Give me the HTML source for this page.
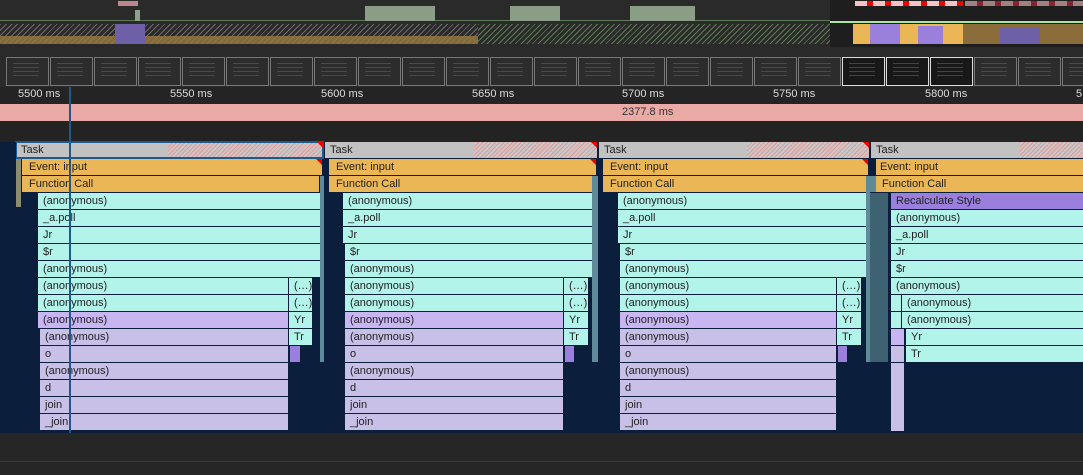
<!DOCTYPE html>
<html><head><style>
*{margin:0;padding:0}
body{width:1083px;height:475px;background:#282828;position:relative;overflow:hidden;font-family:"Liberation Sans",sans-serif}
.a{position:absolute}
.b{position:absolute;height:16px;font-size:11px;line-height:17px;padding-left:5px;color:#222;box-sizing:border-box;overflow:hidden;white-space:nowrap}
.c{background:#b2f3ea}.o{background:#ebb655}.t{background:#c2c2c2}.p{background:#c8b5f2}.l{background:#c8c0e6}.r{background:#9a7fdc}
.h{background:repeating-linear-gradient(135deg,#e29a9a 0 1px,#c8c8c8 1px 3px)}
.f{position:absolute;top:57px;width:41px;height:27px;border:1px solid #777;background:#2c2c2c}
.f::after{content:"";position:absolute;left:6px;top:5px;width:26px;height:16px;background:repeating-linear-gradient(180deg,#555 0 1px,transparent 1px 4px);opacity:.7}
.tl{position:absolute;top:88px;font-size:11px;color:#ddd}
.tri{position:absolute;width:0;height:0;border-top:6px solid #e00;border-left:6px solid transparent}
</style></head><body>
<!-- overview -->
<div class="a" style="left:0;top:0;width:1083px;height:47px;background:#2a2a2a"></div>
<div class="a" style="left:0;top:20px;width:1083px;height:1px;background:#5c7a55"></div>
<div class="a" style="left:135px;top:10px;width:5px;height:11px;background:#8da388"></div>
<div class="a" style="left:365px;top:6px;width:70px;height:15px;background:#8a9e85"></div>
<div class="a" style="left:510px;top:6px;width:50px;height:15px;background:#8a9e85"></div>
<div class="a" style="left:630px;top:6px;width:65px;height:15px;background:#8a9e85"></div>
<div class="a" style="left:118px;top:1px;width:20px;height:5px;background:#b8888a"></div>
<div class="a" style="left:0;top:24px;width:830px;height:20px;background:repeating-linear-gradient(135deg,#6c6c6c 0 1px,#2a2a2a 1px 4px)"></div>
<div class="a" style="left:0;top:36px;width:830px;height:8px;background:#9a7a40;opacity:.8"></div>
<div class="a" style="left:115px;top:24px;width:30px;height:20px;background:#6f5fa6"></div>
<div class="a" style="left:478px;top:24px;width:352px;height:20px;background:repeating-linear-gradient(135deg,#5d7a52 0 1px,#2a2a2a 1px 4px)"></div>
<div class="a" style="left:830px;top:0;width:253px;height:47px;background:#1e1e1e"></div>
<div class="a" style="left:830px;top:21px;width:253px;height:2px;background:#a6e89a"></div>
<div class="a" style="left:853px;top:24px;width:110px;height:20px;background:#ebb655"></div>
<div class="a" style="left:870px;top:24px;width:30px;height:20px;background:#9a7fdc"></div>
<div class="a" style="left:918px;top:26px;width:25px;height:18px;background:#9a7fdc"></div>
<div class="a" style="left:963px;top:24px;width:120px;height:20px;background:#8b6d3c"></div>
<div class="a" style="left:1000px;top:28px;width:40px;height:16px;background:#6f5fa6"></div>
<div class="a" style="left:855px;top:1px;width:108px;height:5px;background:repeating-linear-gradient(90deg,#f4c4c4 0 12px,#e00 12px 18px)"></div>
<div class="a" style="left:965px;top:1px;width:118px;height:5px;background:repeating-linear-gradient(90deg,#a08080 0 12px,#8a2030 12px 18px)"></div>
<div class="a" style="left:0;top:47px;width:1083px;height:40px;background:#2a2a2a"></div>
<div class="f" style="left:6px"></div><div class="f" style="left:50px"></div><div class="f" style="left:94px"></div><div class="f" style="left:138px"></div><div class="f" style="left:182px"></div><div class="f" style="left:226px"></div><div class="f" style="left:270px"></div><div class="f" style="left:314px"></div><div class="f" style="left:358px"></div><div class="f" style="left:402px"></div><div class="f" style="left:446px"></div><div class="f" style="left:490px"></div><div class="f" style="left:534px"></div><div class="f" style="left:578px"></div><div class="f" style="left:622px"></div><div class="f" style="left:666px"></div><div class="f" style="left:710px"></div><div class="f" style="left:754px"></div><div class="f" style="left:798px"></div><div class="f" style="left:842px;border-color:#ddd;background:#181818"></div><div class="f" style="left:886px;border-color:#ddd;background:#181818"></div><div class="f" style="left:930px;border-color:#ddd;background:#181818"></div><div class="f" style="left:974px"></div><div class="f" style="left:1018px"></div><div class="f" style="left:1062px"></div>
<!-- ruler -->
<div class="a" style="left:0;top:87px;width:1083px;height:17px;background:#242424"></div>
<div class="tl" style="left:18px">5500 ms</div><div class="tl" style="left:170px">5550 ms</div><div class="tl" style="left:321px">5600 ms</div><div class="tl" style="left:472px">5650 ms</div><div class="tl" style="left:622px">5700 ms</div><div class="tl" style="left:773px">5750 ms</div><div class="tl" style="left:925px">5800 ms</div><div class="tl" style="left:1076px">5</div>
<div class="a" style="left:0;top:104px;width:1083px;height:17px;background:#eaaaa6;font-size:11px;line-height:17px;color:#333"><span style="position:absolute;left:622px">2377.8 ms</span></div>
<div class="a" style="left:0;top:121px;width:1083px;height:21px;background:#232323"></div>
<!-- flame -->
<div class="a" style="left:0;top:142px;width:1083px;height:291px;background:#0b1e3b"></div>
<!-- G1 -->
<div class="b t" style="left:16px;top:142px;width:307px">Task</div>
<div class="a h" style="left:168px;top:142px;width:155px;height:16px"></div>
<div class="a" style="left:15px;top:141px;width:309px;height:18px;border:2px solid #1a5a94;box-sizing:border-box"></div>
<div class="b o" style="left:22px;top:159px;width:300px;padding-left:7px">Event: input</div>
<div class="b o" style="left:22px;top:176px;width:297px;padding-left:7px">Function Call</div>
<div class="b c" style="left:38px;top:193px;width:282px">(anonymous)</div>
<div class="b c" style="left:38px;top:210px;width:282px">_a.poll</div>
<div class="b c" style="left:38px;top:227px;width:282px">Jr</div>
<div class="b c" style="left:38px;top:244px;width:282px">$r</div>
<div class="b c" style="left:38px;top:261px;width:282px">(anonymous)</div>
<div class="b c" style="left:38px;top:278px;width:250px">(anonymous)</div><div class="b c" style="left:289px;top:278px;width:23px">(…)</div>
<div class="b c" style="left:38px;top:295px;width:250px">(anonymous)</div><div class="b c" style="left:289px;top:295px;width:23px">(…)</div>
<div class="b p" style="left:38px;top:312px;width:250px">(anonymous)</div><div class="b c" style="left:289px;top:312px;width:23px">Yr</div>
<div class="b l" style="left:40px;top:329px;width:248px">(anonymous)</div><div class="b c" style="left:289px;top:329px;width:23px">Tr</div>
<div class="b l" style="left:40px;top:346px;width:248px">o</div><div class="a r" style="left:290px;top:346px;width:10px;height:16px"></div>
<div class="b l" style="left:40px;top:363px;width:248px">(anonymous)</div>
<div class="b l" style="left:40px;top:380px;width:248px">d</div>
<div class="b l" style="left:40px;top:397px;width:248px">join</div>
<div class="b l" style="left:40px;top:414px;width:248px">_join</div>
<div class="a" style="left:320px;top:176px;width:4px;height:186px;background:#5f8a9a"></div>
<!-- G2 -->
<div class="b t" style="left:325px;top:142px;width:272px">Task</div>
<div class="a h" style="left:474px;top:142px;width:123px;height:16px"></div>
<div class="b o" style="left:329px;top:159px;width:267px;padding-left:7px">Event: input</div>
<div class="b o" style="left:329px;top:176px;width:263px;padding-left:7px">Function Call</div>
<div class="b c" style="left:343px;top:193px;width:249px">(anonymous)</div>
<div class="b c" style="left:343px;top:210px;width:249px">_a.poll</div>
<div class="b c" style="left:343px;top:227px;width:249px">Jr</div>
<div class="b c" style="left:345px;top:244px;width:247px">$r</div>
<div class="b c" style="left:345px;top:261px;width:247px">(anonymous)</div>
<div class="b c" style="left:345px;top:278px;width:218px">(anonymous)</div><div class="b c" style="left:564px;top:278px;width:24px">(…)</div>
<div class="b c" style="left:345px;top:295px;width:218px">(anonymous)</div><div class="b c" style="left:564px;top:295px;width:24px">(…)</div>
<div class="b p" style="left:345px;top:312px;width:218px">(anonymous)</div><div class="b c" style="left:564px;top:312px;width:24px">Yr</div>
<div class="b l" style="left:345px;top:329px;width:218px">(anonymous)</div><div class="b c" style="left:564px;top:329px;width:24px">Tr</div>
<div class="b l" style="left:345px;top:346px;width:218px">o</div><div class="a r" style="left:565px;top:346px;width:9px;height:16px"></div>
<div class="b l" style="left:345px;top:363px;width:218px">(anonymous)</div>
<div class="b l" style="left:345px;top:380px;width:218px">d</div>
<div class="b l" style="left:345px;top:397px;width:218px">join</div>
<div class="b l" style="left:345px;top:414px;width:218px">_join</div>
<div class="a" style="left:592px;top:176px;width:6px;height:186px;background:#5f8a9a"></div>
<!-- G3 -->
<div class="b t" style="left:599px;top:142px;width:270px">Task</div>
<div class="a h" style="left:747px;top:142px;width:122px;height:16px"></div>
<div class="b o" style="left:603px;top:159px;width:265px;padding-left:7px">Event: input</div>
<div class="b o" style="left:603px;top:176px;width:263px;padding-left:7px">Function Call</div>
<div class="b c" style="left:618px;top:193px;width:248px">(anonymous)</div>
<div class="b c" style="left:618px;top:210px;width:248px">_a.poll</div>
<div class="b c" style="left:618px;top:227px;width:248px">Jr</div>
<div class="b c" style="left:620px;top:244px;width:246px">$r</div>
<div class="b c" style="left:620px;top:261px;width:246px">(anonymous)</div>
<div class="b c" style="left:620px;top:278px;width:216px">(anonymous)</div><div class="b c" style="left:837px;top:278px;width:24px">(…)</div>
<div class="b c" style="left:620px;top:295px;width:216px">(anonymous)</div><div class="b c" style="left:837px;top:295px;width:24px">(…)</div>
<div class="b p" style="left:620px;top:312px;width:216px">(anonymous)</div><div class="b c" style="left:837px;top:312px;width:24px">Yr</div>
<div class="b l" style="left:620px;top:329px;width:216px">(anonymous)</div><div class="b c" style="left:837px;top:329px;width:24px">Tr</div>
<div class="b l" style="left:620px;top:346px;width:216px">o</div><div class="a r" style="left:838px;top:346px;width:9px;height:16px"></div>
<div class="b l" style="left:620px;top:363px;width:216px">(anonymous)</div>
<div class="b l" style="left:620px;top:380px;width:216px">d</div>
<div class="b l" style="left:620px;top:397px;width:216px">join</div>
<div class="b l" style="left:620px;top:414px;width:216px">_join</div>
<div class="a" style="left:866px;top:176px;width:4px;height:186px;background:#5f8a9a"></div>
<!-- G4 -->
<div class="b t" style="left:871px;top:142px;width:212px">Task</div>
<div class="a h" style="left:1020px;top:142px;width:63px;height:16px"></div>
<div class="b o" style="left:876px;top:159px;width:207px;padding-left:4px">Event: input</div>
<div class="b o" style="left:876px;top:176px;width:207px;padding-left:6px">Function Call</div>
<div class="b r" style="left:891px;top:193px;width:192px">Recalculate Style</div>
<div class="b c" style="left:891px;top:210px;width:192px">(anonymous)</div>
<div class="b c" style="left:891px;top:227px;width:192px">_a.poll</div>
<div class="b c" style="left:891px;top:244px;width:192px">Jr</div>
<div class="b c" style="left:891px;top:261px;width:192px">$r</div>
<div class="b c" style="left:891px;top:278px;width:192px">(anonymous)</div>
<div class="b c" style="left:891px;top:295px;width:10px"></div><div class="b c" style="left:902px;top:295px;width:181px">(anonymous)</div>
<div class="b c" style="left:891px;top:312px;width:10px"></div><div class="b c" style="left:902px;top:312px;width:181px">(anonymous)</div>
<div class="b p" style="left:891px;top:329px;width:13px"></div><div class="b c" style="left:906px;top:329px;width:177px">Yr</div>
<div class="b l" style="left:891px;top:346px;width:13px"></div><div class="b c" style="left:906px;top:346px;width:177px">Tr</div>
<div class="a l" style="left:891px;top:363px;width:13px;height:68px"></div>
<div class="a" style="left:870px;top:193px;width:18px;height:169px;background:#3f6272"></div>
<div class="a" style="left:870px;top:176px;width:6px;height:16px;background:#5f8a9a"></div>
<!-- markers -->
<div class="tri" style="left:317px;top:142px"></div><div class="tri" style="left:316px;top:159px"></div>
<div class="tri" style="left:591px;top:142px"></div><div class="tri" style="left:590px;top:159px"></div>
<div class="tri" style="left:863px;top:142px"></div><div class="tri" style="left:862px;top:159px"></div>
<div class="a" style="left:0;top:142px;width:16px;height:291px;background:#0b1e3b"></div>
<div class="a" style="left:16px;top:159px;width:5px;height:48px;background:#8c8c70"></div>
<!-- cursor line -->
<div class="a" style="left:69px;top:87px;width:2px;height:346px;background:#1a5a94"></div>
<!-- bottom -->
<div class="a" style="left:0;top:433px;width:1083px;height:42px;background:#262626"></div>
<div class="a" style="left:0;top:461px;width:1083px;height:1px;background:#3a3a3a"></div>
</body></html>
